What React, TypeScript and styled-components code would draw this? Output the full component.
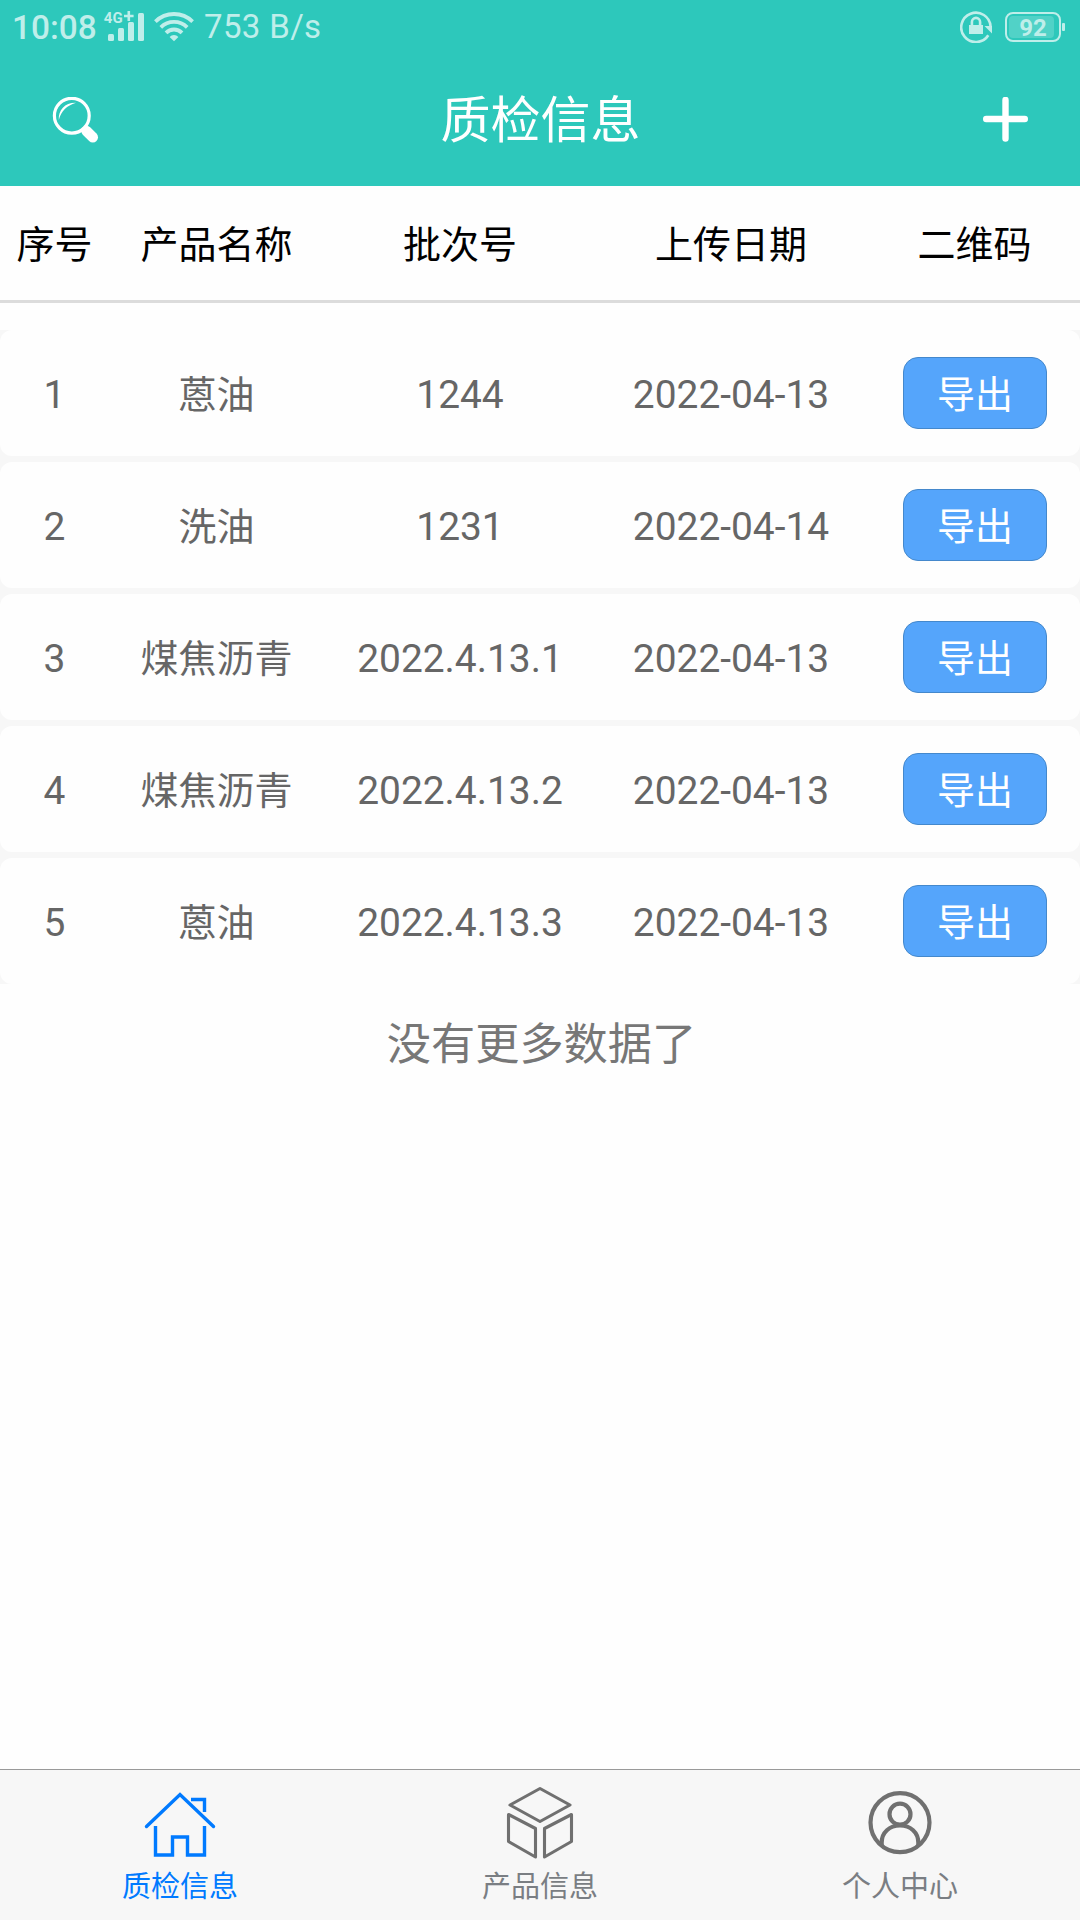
import React from "react";
import styled, { createGlobalStyle } from "styled-components";

const GlobalStyle = createGlobalStyle`
  * { box-sizing: border-box; }
  body { margin: 0; background: #fefefe; }
`;

const Screen = styled.div`
  width: 1080px;
  height: 1920px;
  display: flex;
  flex-direction: column;
  background: #fefefe;
  font-family: Roboto, "Noto Sans CJK SC", sans-serif;
  overflow: hidden;
`;

const Top = styled.header`
  height: 186px;
  flex: none;
  background: #2dc8bb;
`;

const StatusBar = styled.div`
  height: 54px;
  display: flex;
  align-items: center;
  justify-content: space-between;
  padding: 0 15px 0 12px;
  color: #bfeeea;
`;

const StatusGroup = styled.div<{ $gap: number }>`
  display: flex;
  align-items: center;
  gap: ${(p) => p.$gap}px;
`;

const Clock = styled.span`
  width: 91px;
  font-size: 33.4px;
  font-weight: 500;
  line-height: 54px;
  padding-top: 2px;
`;

const Speed = styled.span`
  font-size: 33px;
  line-height: 52px;
  margin-left: 10px;
  letter-spacing: 0.35px;
`;

const NavBar = styled.div`
  height: 132px;
  display: grid;
  grid-template-columns: 160px 1fr 160px;
  align-items: center;
`;

const Title = styled.h1`
  margin: 0;
  padding: 1px 0 0 1px;
  text-align: center;
  color: #fff;
  font-size: 50px;
  line-height: 72px;
  font-weight: 400;
`;

const IconButton = styled.button<{ $side: "start" | "end" }>`
  display: flex;
  justify-content: flex-${(p) => p.$side};
  border: 0;
  padding: 0 52px;
  background: none;
`;

const Columns = styled.div`
  display: grid;
  grid-template-columns: 109px 215px 272px 270px 214px;
  align-items: center;
  text-align: center;
  font-size: 38px;
  line-height: 56px;
  white-space: nowrap;
`;

const TableHead = styled(Columns)`
  height: 117px;
  flex: none;
  padding-top: 4px;
  border-bottom: 3px solid #dcdcdc;
  color: #000;
`;

const HeadCell = styled.span`
  &:last-child {
    padding-left: 3px;
  }
`;

const List = styled.div`
  margin-top: 27px;
  display: flex;
  flex-direction: column;
  gap: 6px;
  background: #f7f7f7;
`;

const Row = styled(Columns)`
  height: 126px;
  border-radius: 12px;
  background: #fefefe;
  color: #666;
`;

const Cell = styled.span<{ $numeric?: boolean }>`
  padding-top: 4px;
  font-size: ${(p) => (p.$numeric ? 38.9 : 38)}px;
`;

const ExportButton = styled.button`
  justify-self: end;
  margin-right: 33px;
  width: 144px;
  height: 72px;
  padding: 4px 0 0;
  border: 1px solid #4488cc;
  border-radius: 15px;
  background: #55a5fb;
  color: #fff;
  font: inherit;
`;

const Empty = styled.p`
  flex: 1;
  margin: 28px 0 0 3px;
  text-align: center;
  font-size: 44.2px;
  line-height: 66px;
  color: #777;
`;

const TabBar = styled.nav`
  height: 151px;
  flex: none;
  display: grid;
  grid-template-columns: repeat(3, 1fr);
  border-top: 1px solid #999;
  background: #f7f7f7;
`;

const Tab = styled.a<{ $active?: boolean }>`
  display: flex;
  flex-direction: column;
  align-items: center;
  padding-top: 14px;
  color: ${(p) => (p.$active ? "#007aff" : "#7a7e83")};
  font-size: 29px;
  line-height: 40px;

  svg {
    margin-bottom: 5px;
  }
`;

const SignalIcon = () => (
  <svg width="42" height="40" viewBox="0 -4 42 40" fill="currentColor">
    <rect x="5" y="23" width="6" height="7" rx="1.5" />
    <rect x="15" y="17" width="6" height="13" rx="1.5" />
    <rect x="25" y="11" width="6" height="19" rx="1.5" />
    <rect x="35" y="2" width="6" height="28" rx="1.5" />
    <text x="0.800" y="12" fontSize="15" fontWeight="700" fontFamily="Roboto">4G</text>
    <path d="M21 3.700h9.600v2.600h-9.600zM24.500 0h2.600v10h-2.600z" />
  </svg>
);

const WifiIcon = () => (
  <svg width="40" height="30" viewBox="0 0 40 30" fill="none" stroke="currentColor" strokeWidth="3.800">
    <path d="M1.400 9.600a26.500 26.500 0 0 1 37.200 0" />
    <path d="M6.800 15.300a18.800 18.800 0 0 1 26.400 0" />
    <path d="M12 20.800a11.300 11.300 0 0 1 16 0" />
    <path d="M15.600 24.900a6.200 6.200 0 0 1 8.800 0L20 29.300z" fill="currentColor" stroke="none" />
  </svg>
);

const RotationLockIcon = () => (
  <svg width="32" height="32" viewBox="0 0 32 32" fill="none" stroke="currentColor">
    <path d="M28.300 24.300A14.700 14.700 0 1 1 30.600 15.500" strokeWidth="2.600" />
    <path d="M24.500 15h7.500v7.500z" fill="currentColor" stroke="none" />
    <rect x="9" y="14" width="14" height="9" fill="currentColor" stroke="none" />
    <path d="M11.900 14v-3a4.100 4.100 0 0 1 8.200 0v3" strokeWidth="2.600" />
  </svg>
);

const BatteryIcon = () => (
  <svg width="60" height="30" viewBox="0 0 60 30" fill="currentColor">
    <rect x="1" y="1" width="54" height="28" rx="7" fill="none" stroke="currentColor" strokeWidth="2" />
    <rect x="4" y="4" width="45" height="22" rx="4" opacity="0.25" />
    <rect x="57" y="11" width="3" height="8" rx="1" />
    <text x="28" y="23.500" fontSize="24" fontWeight="700" fontFamily="Roboto" textAnchor="middle">92</text>
  </svg>
);

const SearchIcon = () => (
  <svg width="48" height="46" viewBox="0 0 48 46" fill="none" stroke="#fff">
    <circle cx="19.800" cy="18.700" r="17.400" strokeWidth="3.200" />
    <path d="M6.800 23C6.200 13 13 5.500 24 5.800C14.500 9 9.500 13.500 6.800 23Z" fill="#fff" stroke="none" />
    <path d="M34.500 34L40.800 40.300" strokeWidth="10.400" strokeLinecap="round" />
  </svg>
);

const PlusIcon = () => (
  <svg width="46" height="46" viewBox="0 0 46 46" stroke="#fff" strokeWidth="6.400" strokeLinecap="round">
    <path d="M4.200 22h38.600M23.500 2.900v38.600" />
  </svg>
);

const HomeIcon = () => (
  <svg width="72" height="78" viewBox="0 0 72 78" fill="none" stroke="currentColor" strokeWidth="3.400">
    <path d="M2.500 42.500L36 10.500L69.500 42.500" strokeLinecap="round" />
    <path d="M11.500 42V71H28.500V53H43.500V71H60.500V42" />
    <path d="M47 15.500H60.500V28" />
  </svg>
);

const BoxIcon = () => (
  <svg width="72" height="78" viewBox="0 0 72 78" fill="none" stroke="#707070" strokeWidth="3.100" strokeLinejoin="round">
    <path d="M36 4.500L66 21L36 37.500L6 21Z" />
    <path d="M4.500 30.500L31.500 44.500V73L4.500 57.500Z" />
    <path d="M67.500 30.500L40.500 44.500V73L67.500 57.500Z" />
  </svg>
);

const PersonIcon = () => (
  <svg width="72" height="78" viewBox="0 0 72 78" fill="none" stroke="#707070" strokeWidth="4.200">
    <circle cx="36" cy="38.600" r="29.500" />
    <circle cx="36" cy="30.200" r="10.500" />
    <path d="M17.700 61V58.500C17.700 48.500 25.500 41.500 36 41.500S54.300 48.500 54.300 58.500V61" />
  </svg>
);

const headings = ["序号", "产品名称", "批次号", "上传日期", "二维码"];

const records = [
  { name: "蒽油", batch: "1244", date: "2022-04-13" },
  { name: "洗油", batch: "1231", date: "2022-04-14" },
  { name: "煤焦沥青", batch: "2022.4.13.1", date: "2022-04-13" },
  { name: "煤焦沥青", batch: "2022.4.13.2", date: "2022-04-13" },
  { name: "蒽油", batch: "2022.4.13.3", date: "2022-04-13" },
];

export default function App() {
  return (
    <Screen>
      <GlobalStyle />
      <Top>
        <StatusBar>
          <StatusGroup $gap={0}>
            <Clock>10:08</Clock>
            <StatusGroup $gap={9}>
              <SignalIcon />
              <WifiIcon />
            </StatusGroup>
            <Speed>753 B/s</Speed>
          </StatusGroup>
          <StatusGroup $gap={13}>
            <RotationLockIcon />
            <BatteryIcon />
          </StatusGroup>
        </StatusBar>
        <NavBar>
          <IconButton $side="start" aria-label="搜索"><SearchIcon /></IconButton>
          <Title>质检信息</Title>
          <IconButton $side="end" aria-label="新增"><PlusIcon /></IconButton>
        </NavBar>
      </Top>
      <TableHead>
        {headings.map((h) => <HeadCell key={h}>{h}</HeadCell>)}
      </TableHead>
      <List>
        {records.map((r, i) => (
          <Row key={i}>
            <Cell $numeric>{i + 1}</Cell>
            <Cell>{r.name}</Cell>
            <Cell $numeric>{r.batch}</Cell>
            <Cell $numeric>{r.date}</Cell>
            <ExportButton>导出</ExportButton>
          </Row>
        ))}
      </List>
      <Empty>没有更多数据了</Empty>
      <TabBar>
        <Tab $active><HomeIcon />质检信息</Tab>
        <Tab><BoxIcon />产品信息</Tab>
        <Tab><PersonIcon />个人中心</Tab>
      </TabBar>
    </Screen>
  );
}
